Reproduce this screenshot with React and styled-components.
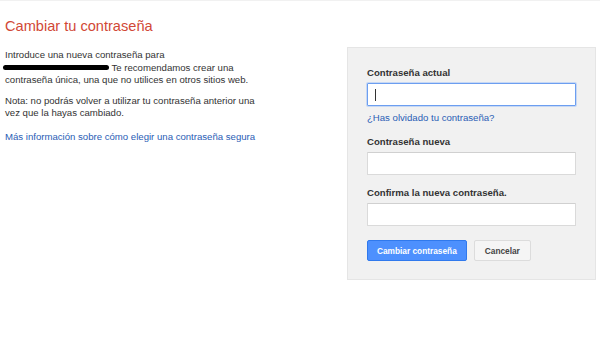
import styled, { createGlobalStyle } from "styled-components";

const GlobalStyle = createGlobalStyle`
  body {
    margin: 0;
    background: #fff;
    font-family: "Liberation Sans", Arial, sans-serif;
    color: #222;
  }
`;

const App = () => {
  return (
    <>
      <GlobalStyle />
      <TopRule />
      <Page>
        <Intro>
          <Title>Cambiar tu contraseña</Title>
          <Para>
            Introduce una nueva contraseña para <Redacted /> Te recomendamos
            crear una contraseña única, una que no utilices en otros sitios web.
          </Para>
          <Para>
            Nota: no podrás volver a utilizar tu contraseña anterior una vez que
            la hayas cambiado.
          </Para>
          <Link href="#">Más información sobre cómo elegir una contraseña segura</Link>
        </Intro>

        <Panel>
          <Label>Contraseña actual</Label>
          <Field $focused>
            <Caret />
          </Field>
          <SmallLink href="#">¿Has olvidado tu contraseña?</SmallLink>

          <Label $spaced>Contraseña nueva</Label>
          <Field />

          <Label $spaced>Confirma la nueva contraseña.</Label>
          <Field />

          <Buttons>
            <Button $primary>Cambiar contraseña</Button>
            <Button>Cancelar</Button>
          </Buttons>
        </Panel>
      </Page>
    </>
  );
};

export default App;

const TopRule = styled.div`
  height: 1px;
  background: #f1f1f1;
`;

const Page = styled.div`
  display: flex;
  justify-content: space-between;
  align-items: flex-start;
  padding: 0 4px 0 5px;
`;

const Intro = styled.div`
  width: 262px;
`;

const Title = styled.h1`
  margin: 16px 0 14px;
  font-size: 14.6px;
  line-height: 18px;
  font-weight: normal;
  color: #d14836;
`;

const Para = styled.p`
  margin: 0 0 8px;
  font-size: 9.6px;
  line-height: 12.5px;
  color: #333;
`;

const Redacted = styled.span`
  display: inline-block;
  width: 106px;
  height: 5px;
  margin-left: -2px;
  background: #000;
  border-radius: 3px;
  vertical-align: 1px;
`;

const Link = styled.a`
  display: block;
  margin-top: 11px;
  font-size: 9.6px;
  line-height: 12.5px;
  color: #2a5db5;
  text-decoration: none;
`;

const Panel = styled.div`
  box-sizing: border-box;
  width: 249px;
  margin-top: 46px;
  padding: 19px 19px 18px 19px;
  background: #f1f1f1;
  border: 1px solid #e5e5e5;
  display: flex;
  flex-direction: column;
  align-items: flex-start;
`;

const Label = styled.label`
  display: block;
  margin-top: ${(p) => (p.$spaced ? "12px" : "0")};
  margin-bottom: 4px;
  font-size: 9.6px;
  line-height: 12px;
  font-weight: bold;
  color: #333;
`;

const Field = styled.div`
  box-sizing: border-box;
  display: flex;
  align-items: center;
  width: 209px;
  height: 23px;
  padding: 0 7px;
  background: #fff;
  border: 1px solid ${(p) => (p.$focused ? "#6c9ef0" : "#dadada")};
  border-top-color: ${(p) => (p.$focused ? "#6c9ef0" : "#d0d0d0")};
  box-shadow: ${(p) => (p.$focused ? "0 0 0 1px rgba(77, 144, 254, 0.25)" : "none")};
  border-radius: 1px;
`;

const Caret = styled.span`
  display: block;
  width: 1px;
  height: 12px;
  background: #333;
`;

const SmallLink = styled.a`
  display: block;
  margin-top: 6px;
  font-size: 9.6px;
  line-height: 12px;
  color: #2a5db5;
  text-decoration: none;
`;

const Buttons = styled.div`
  display: flex;
  gap: 7px;
  margin-top: 14px;
`;

const Button = styled.button`
  box-sizing: border-box;
  height: 21px;
  padding: 0 ${(p) => (p.$primary ? "9px" : "10px")};
  min-width: ${(p) => (p.$primary ? "99px" : "54px")};
  border-radius: 2px;
  border: 1px solid ${(p) => (p.$primary ? "#3079ed" : "#dcdcdc")};
  background: ${(p) => (p.$primary ? "#4d90fe" : "#f5f5f5")};
  color: ${(p) => (p.$primary ? "#fff" : "#444")};
  font-family: "Liberation Sans", Arial, sans-serif;
  font-size: 8.3px;
  font-weight: bold;
  cursor: pointer;
`;
